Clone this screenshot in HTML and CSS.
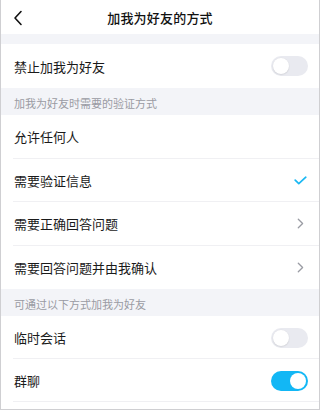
FILE: index.html
```html
<!DOCTYPE html>
<html lang="zh">
<head>
<meta charset="utf-8">
<link rel="stylesheet" href="styles.css">
</head>
<body>
<div class="screen">
  <header class="topbar">
    <span class="back">
      <svg width="10" height="16" viewBox="0 0 10 16"><path d="M8 1.5 L2 8 L8 14.5" fill="none" stroke="#111" stroke-width="1.6" stroke-linecap="round" stroke-linejoin="round"/></svg>
    </span>
    <h1 class="title">加我为好友的方式</h1>
  </header>
  <div class="gap"></div>
  <div class="row"><span class="label">禁止加我为好友</span><span class="toggle"></span></div>
  <div class="section">加我为好友时需要的验证方式</div>
  <div class="group">
    <div class="row sep"><span class="label">允许任何人</span></div>
    <div class="row sep"><span class="label">需要验证信息</span>
      <svg class="check" width="13" height="9" viewBox="0 0 13 9"><path d="M1.2 4.2 L4.8 7.6 L11.8 1.2" fill="none" stroke="#1ab8f3" stroke-width="1.7" stroke-linecap="round" stroke-linejoin="round"/></svg>
    </div>
    <div class="row sep"><span class="label">需要正确回答问题</span>
      <svg class="chev" width="7" height="11" viewBox="0 0 7 11"><path d="M1.3 1.2 L5.6 5.5 L1.3 9.8" fill="none" stroke="#9a9ca4" stroke-width="1.3" stroke-linecap="round" stroke-linejoin="round"/></svg>
    </div>
    <div class="row"><span class="label">需要回答问题并由我确认</span>
      <svg class="chev" width="7" height="11" viewBox="0 0 7 11"><path d="M1.3 1.2 L5.6 5.5 L1.3 9.8" fill="none" stroke="#9a9ca4" stroke-width="1.3" stroke-linecap="round" stroke-linejoin="round"/></svg>
    </div>
  </div>
  <div class="section">可通过以下方式加我为好友</div>
  <div class="group">
    <div class="row sep short"><span class="label">临时会话</span><span class="toggle"></span></div>
    <div class="row sep short"><span class="label">群聊</span><span class="toggle on"></span></div>
  </div>
  <div class="rest"></div>
</div>
</body>
</html>
```

FILE: styles.css
```css
* { box-sizing: border-box; margin: 0; padding: 0; }
html, body { width: 320px; height: 411px; overflow: hidden; background: #fff; }
body { font-family: "Noto Sans CJK SC", "Noto Sans", sans-serif; color: #1a1a1a; }
.screen {
  width: 320px; height: 410px;
  border-left: 1px solid #cfcfd2; border-right: 1px solid #cfcfd2; border-bottom: 1px solid #cfcfd2;
  display: flex; flex-direction: column; background: #fff;
}
.topbar { height: 34px; display: flex; align-items: center; justify-content: center; position: relative; }
.back { position: absolute; left: 12px; top: 10px; display: flex; }
.title { font-size: 13px; font-weight: 500; color: #111; letter-spacing: 0.2px; }
.gap { height: 10px; background: #f3f4f8; }
.row {
  height: 44px; display: flex; align-items: center; justify-content: space-between;
  padding: 0 11px 0 13px; position: relative; background: #fff;
}
.group .row { height: 43.5px; }
.group .row.short { height: 43px; }
.row.sep::after {
  content: ""; position: absolute; left: 12px; right: 0; bottom: 0; height: 1px; background: #f0f0f3;
}
.label { font-size: 13px; color: #1a1a1a; }
.section {
  height: 27px; background: #f3f4f8; color: #9a9ba3; font-size: 11px;
  padding: 8px 0 0 13px; line-height: 14px;
}
.toggle {
  width: 37px; height: 20px; border-radius: 10px; background: #e9eaf0; position: relative;
}
.toggle::after {
  content: ""; position: absolute; left: 2px; top: 2px; width: 16px; height: 16px; border-radius: 50%;
  background: #fff; box-shadow: 0 0.5px 1.5px rgba(0,0,0,0.15);
}
.toggle.on { background: #12b7f5; }
.toggle.on::after { left: 19px; box-shadow: none; }
.check { margin-right: 1px; }
.chev { margin-right: 4px; }
.rest { flex: 1; background: #fff; }
```
